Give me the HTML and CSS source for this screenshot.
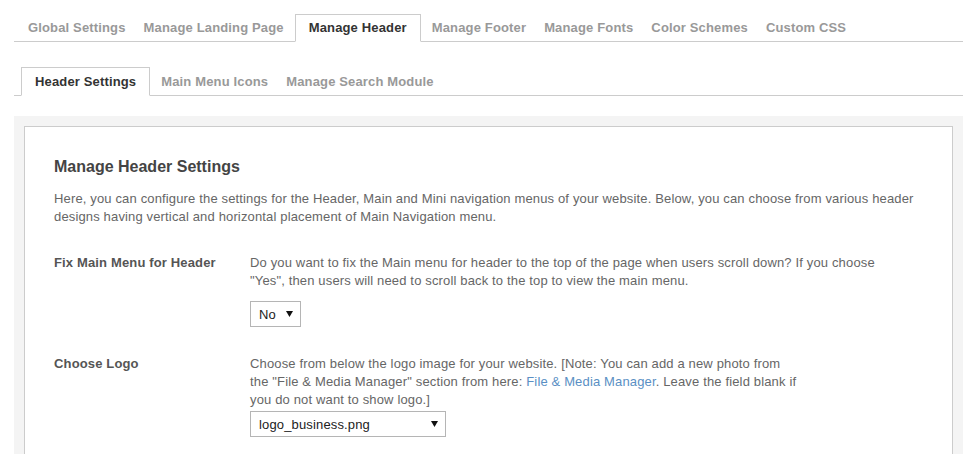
FILE: index.html
```html
<!DOCTYPE html>
<html lang="en">
<head>
    <meta charset="UTF-8">
    <meta name="viewport" content="width=device-width, initial-scale=1.0">
    <title>Manage Header</title>
    <link rel="stylesheet" href="styles.css">
</head>
<body>
    <div class="page">
        <ul class="tabs main-tabs">
            <li class="tab">Global Settings</li>
            <li class="tab">Manage Landing Page</li>
            <li class="tab active">Manage Header</li>
            <li class="tab">Manage Footer</li>
            <li class="tab">Manage Fonts</li>
            <li class="tab">Color Schemes</li>
            <li class="tab">Custom CSS</li>
        </ul>

        <ul class="tabs sub-tabs">
            <li class="tab active">Header Settings</li>
            <li class="tab">Main Menu Icons</li>
            <li class="tab">Manage Search Module</li>
        </ul>

        <div class="panel">
            <div class="panel-box">
                <h2 class="box-title">Manage Header Settings</h2>
                <p class="box-intro">Here, you can configure the settings for the Header, Main and Mini navigation menus of your website. Below, you can choose from various header designs having vertical and horizontal placement of Main Navigation menu.</p>

                <!-- fix main menu -->
                <div class="field">
                    <div class="field-label">Fix Main Menu for Header</div>
                    <div class="field-body">
                        <p class="field-desc">Do you want to fix the Main menu for header to the top of the page when users scroll down? If you choose "Yes", then users will need to scroll back to the top to view the main menu.</p>
                        <div class="select select-small">
                            <span>No</span>
                            <svg class="select-arrow" width="7" height="6" viewBox="0 0 7 6"><polygon points="0,0 7,0 3.5,6" fill="#111"/></svg>
                        </div>
                    </div>
                </div>

                <!-- logo -->
                <div class="field">
                    <div class="field-label">Choose Logo</div>
                    <div class="field-body">
                        <p class="field-desc narrow">Choose from below the logo image for your website. [Note: You can add a new photo from the "File &amp; Media Manager" section from here: <a href="#" class="link">File &amp; Media Manager</a>. Leave the field blank if you do not want to show logo.]</p>
                        <div class="select select-wide">
                            <span>logo_business.png</span>
                            <svg class="select-arrow" width="7" height="6" viewBox="0 0 7 6"><polygon points="0,0 7,0 3.5,6" fill="#111"/></svg>
                        </div>
                    </div>
                </div>
            </div>
        </div>
    </div>
</body>
</html>
```

FILE: styles.css
```css
body {
    margin: 0;
    background: #fff;
    font-family: "Liberation Sans", Arial, sans-serif;
    font-size: 13px;
    letter-spacing: 0.15px;
    color: #666;
}

.page {
    padding: 14px 13px 40px 14px;
}

.tabs {
    display: flex;
    list-style: none;
    margin: 0;
    border-bottom: 1px solid #ccc;
}

.main-tabs {
    padding: 0 0 0 5px;
}

.sub-tabs {
    margin-top: 25px;
    padding: 0 0 0 7px;
}

.tab {
    padding: 0 8px;
    border: 1px solid transparent;
    margin-bottom: -1px;
    line-height: 26px;
    font-weight: bold;
    color: #999;
    white-space: nowrap;
}

.sub-tabs .tab {
    line-height: 27px;
}

.tab.active {
    padding: 0 13px;
    margin: 0 2px -1px;
    border-color: #ccc;
    border-bottom-color: #fff;
    background: #fff;
    color: #333;
}

.sub-tabs .tab.active {
    margin-left: 0;
}

.panel {
    margin-top: 20px;
    padding: 10px;
    background: #f4f4f4;
}

.panel-box {
    background: #fff;
    border: 1px solid #ccc;
    padding: 30px 29px 20px 29px;
}

.box-title {
    margin: 0 0 13px;
    font-size: 16px;
    line-height: 20px;
    letter-spacing: 0;
    color: #444;
}

.box-intro {
    margin: 0;
    line-height: 18px;
}

.field {
    display: flex;
    margin-top: 28px;
}

.field-label {
    width: 196px;
    flex-shrink: 0;
    font-weight: bold;
    line-height: 18px;
    color: #555;
}

.field-desc {
    margin: 0;
    max-width: 640px;
    line-height: 18px;
}

.field-desc.narrow {
    max-width: 549px;
}

.link {
    color: #5a8fc4;
    text-decoration: none;
}

.select {
    display: flex;
    align-items: center;
    justify-content: space-between;
    box-sizing: border-box;
    height: 26px;
    padding: 0 7px 0 8px;
    border: 1px solid #b5b5b5;
    background: #fff;
    color: #222;
}

.select-small {
    width: 51px;
    margin-top: 11px;
}

.select-wide {
    width: 196px;
    margin-top: 2px;
}

.select-arrow {
    display: block;
}
```
